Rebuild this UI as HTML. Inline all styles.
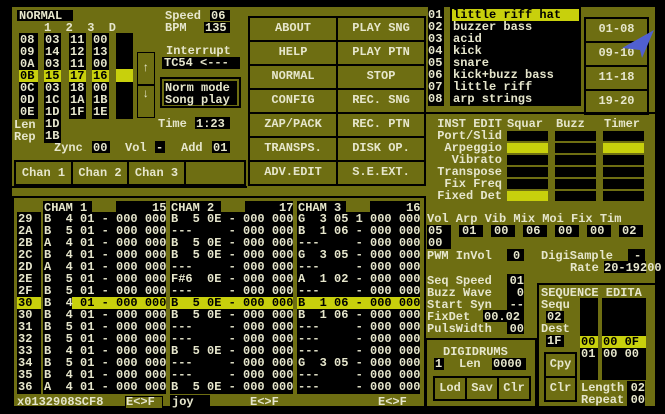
<!DOCTYPE html>
<html><head><meta charset="utf-8"><style>
body{margin:0;width:665px;height:414px;background:#000;position:relative;overflow:hidden;font:bold 12px/12px "Liberation Mono",monospace;color:#e6e6cc}
.a{position:absolute;white-space:pre}
.k{background:#000}
.y{background:#c8d00c;color:#000}
.o{background:#6e6e12}
.btn{position:absolute;background:#6e6e12;border:2px solid #000;box-sizing:border-box;text-align:center;line-height:20px}
.sq{position:absolute;background:#000;width:41px;height:10px}
.sqy{position:absolute;background:#c8d00c;width:41px;height:10px}
pre{margin:0;font:inherit}
</style></head><body>
<div class="a o" style="left:12px;top:7px;width:643px;height:401px"></div>

<div class="a k" style="left:17px;top:10px;width:56px;height:11px"></div>
<div class="a" style="left:19px;top:10px">NORMAL</div>
<div class="a" style="left:44px;top:22px">1  2  3  D</div>
<div class="a k" style="left:19px;top:33px;width:19px;height:86px"></div>
<div class="a k" style="left:44px;top:33px;width:17px;height:110px"></div>
<div class="a k" style="left:69px;top:33px;width:17px;height:86px"></div>
<div class="a k" style="left:92px;top:33px;width:17px;height:86px"></div>
<pre class="a" style="left:20px;top:34px">08
09
0A

0C
0D
0E
</pre>
<pre class="a" style="left:45px;top:34px">03
14
03

03
1C
1D
1D
1B</pre>
<pre class="a" style="left:70px;top:34px">11
12
11

18
1A
1F</pre>
<pre class="a" style="left:93px;top:34px">00
13
00

00
1B
1E</pre>
<div class="a y" style="left:19px;top:70px;width:19px;height:12px"></div>
<div class="a y" style="left:44px;top:70px;width:17px;height:12px"></div>
<div class="a y" style="left:69px;top:70px;width:17px;height:12px"></div>
<div class="a y" style="left:92px;top:70px;width:17px;height:12px"></div>
<div class="a" style="left:20px;top:70px;color:#000">0B</div>
<div class="a" style="left:45px;top:70px;color:#000">15</div>
<div class="a" style="left:70px;top:70px;color:#000">17</div>
<div class="a" style="left:93px;top:70px;color:#000">16</div>
<div class="a k" style="left:116px;top:33px;width:17px;height:86px"></div>
<div class="a y" style="left:116px;top:69px;width:17px;height:13px"></div>
<div class="a" style="left:137px;top:52px;width:18px;height:66px;border:1px solid #000;box-sizing:border-box"></div>
<div class="a" style="left:137px;top:84px;width:18px;height:2px;background:#000"></div>
<div class="a" style="left:142px;top:62px">↑</div>
<div class="a" style="left:142px;top:88px">↓</div>
<pre class="a" style="left:14px;top:119px">Len
Rep</pre>
<div class="a" style="left:165px;top:10px">Speed</div>
<div class="a k" style="left:210px;top:10px;width:20px;height:11px"></div>
<div class="a" style="left:211px;top:10px">06</div>
<div class="a" style="left:165px;top:22px">BPM</div>
<div class="a k" style="left:204px;top:22px;width:26px;height:11px"></div>
<div class="a" style="left:205px;top:22px">135</div>
<div class="a" style="left:166px;top:45px">Interrupt</div>
<div class="a k" style="left:162px;top:57px;width:78px;height:12px"></div>
<div class="a" style="left:164px;top:57px">TC54 &lt;---</div>
<div class="a" style="left:160px;top:77px;width:81px;height:31px;border:2px solid #000;box-sizing:border-box"></div>
<div class="a k" style="left:164px;top:81px;width:73px;height:24px"></div>
<pre class="a" style="left:165px;top:82px">Norm mode
Song play</pre>
<div class="a" style="left:158px;top:118px">Time</div>
<div class="a k" style="left:195px;top:117px;width:35px;height:12px"></div>
<div class="a" style="left:196px;top:118px">1:23</div>
<div class="a" style="left:54px;top:142px">Zync</div>
<div class="a k" style="left:92px;top:141px;width:18px;height:12px"></div>
<div class="a" style="left:93px;top:142px">00</div>
<div class="a" style="left:125px;top:142px">Vol</div>
<div class="a k" style="left:155px;top:141px;width:10px;height:12px"></div>
<div class="a" style="left:156px;top:142px">-</div>
<div class="a" style="left:181px;top:142px">Add</div>
<div class="a k" style="left:212px;top:141px;width:18px;height:12px"></div>
<div class="a" style="left:213px;top:142px">01</div>
<div class="btn" style="left:14px;top:160px;width:59px;height:26px;line-height:22px">Chan 1</div>
<div class="btn" style="left:71px;top:160px;width:58px;height:26px;line-height:22px">Chan 2</div>
<div class="btn" style="left:127px;top:160px;width:59px;height:26px;line-height:22px">Chan 3</div>
<div class="btn" style="left:184px;top:160px;width:62px;height:26px"></div>
<div class="a k" style="left:12px;top:186px;width:235px;height:2px"></div>

<div class="btn" style="left:248px;top:16px;width:90px;height:26px">ABOUT</div>
<div class="btn" style="left:336px;top:16px;width:90px;height:26px">PLAY SNG</div>
<div class="btn" style="left:248px;top:40px;width:90px;height:26px">HELP</div>
<div class="btn" style="left:336px;top:40px;width:90px;height:26px">PLAY PTN</div>
<div class="btn" style="left:248px;top:64px;width:90px;height:26px">NORMAL</div>
<div class="btn" style="left:336px;top:64px;width:90px;height:26px">STOP</div>
<div class="btn" style="left:248px;top:88px;width:90px;height:26px">CONFIG</div>
<div class="btn" style="left:336px;top:88px;width:90px;height:26px">REC. SNG</div>
<div class="btn" style="left:248px;top:112px;width:90px;height:26px">ZAP/PACK</div>
<div class="btn" style="left:336px;top:112px;width:90px;height:26px">REC. PTN</div>
<div class="btn" style="left:248px;top:136px;width:90px;height:26px">TRANSPS.</div>
<div class="btn" style="left:336px;top:136px;width:90px;height:26px">DISK OP.</div>
<div class="btn" style="left:248px;top:160px;width:90px;height:26px">ADV.EDIT</div>
<div class="btn" style="left:336px;top:160px;width:90px;height:26px">S.E.EXT.</div>

<div class="a k" style="left:428px;top:7px;width:16px;height:99px"></div>
<pre class="a" style="left:428px;top:9px;line-height:12px">01
02
03
04
05
06
07
08</pre>
<div class="a k" style="left:450px;top:7px;width:131px;height:99px"></div>
<div class="a y" style="left:452px;top:9px;width:127px;height:12px"></div>
<pre class="a" style="left:453px;top:9px;line-height:12px"><span style="color:#000">little riff hat</span>
buzzer bass
acid
kick
snare
kick+buzz bass
little riff
arp strings</pre>
<div class="btn" style="left:584px;top:17px;width:65px;height:26px">01-08</div>
<div class="btn" style="left:584px;top:41px;width:65px;height:26px">09-10</div>
<div class="btn" style="left:584px;top:65px;width:65px;height:26px">11-18</div>
<div class="btn" style="left:584px;top:89px;width:65px;height:26px">19-20</div>
<svg class="a" style="left:622px;top:30px" width="34" height="32"><polygon points="0,18 32,0 20,28 18,20" fill="#5060d0"/></svg>
<div class="a k" style="left:426px;top:112px;width:229px;height:2px"></div>

<pre class="a" style="left:428px;top:118px;text-align:right;width:74px">INST EDIT
Port/Slid
Arpeggio
Vibrato
Transpose
Fix Freq
Fixed Det</pre>
<div class="a" style="left:507px;top:118px">Squar</div>
<div class="a" style="left:556px;top:118px">Buzz</div>
<div class="a" style="left:604px;top:118px">Timer</div>
<div class="sq" style="left:507px;top:131px"></div><div class="sq" style="left:555px;top:131px"></div><div class="sq" style="left:603px;top:131px"></div>
<div class="sqy" style="left:507px;top:143px"></div><div class="sq" style="left:555px;top:143px"></div><div class="sqy" style="left:603px;top:143px"></div>
<div class="sq" style="left:507px;top:155px"></div><div class="sq" style="left:555px;top:155px"></div><div class="sq" style="left:603px;top:155px"></div>
<div class="sq" style="left:507px;top:167px"></div><div class="sq" style="left:555px;top:167px"></div><div class="sq" style="left:603px;top:167px"></div>
<div class="sq" style="left:507px;top:179px"></div><div class="sq" style="left:555px;top:179px"></div><div class="sq" style="left:603px;top:179px"></div>
<div class="sqy" style="left:507px;top:191px"></div><div class="sq" style="left:555px;top:191px"></div><div class="sq" style="left:603px;top:191px"></div>

<div class="a" style="left:427px;top:213px">Vol Arp Vib Mix Moi Fix Tim</div>
<div class="a k" style="left:427px;top:225px;width:24px;height:24px"></div>
<pre class="a" style="left:428px;top:225px">05
00</pre>
<div class="a k" style="left:459px;top:225px;width:24px;height:12px"></div><div class="a" style="left:462px;top:225px">01</div>
<div class="a k" style="left:491px;top:225px;width:24px;height:12px"></div><div class="a" style="left:494px;top:225px">00</div>
<div class="a k" style="left:523px;top:225px;width:24px;height:12px"></div><div class="a" style="left:526px;top:225px">06</div>
<div class="a k" style="left:555px;top:225px;width:24px;height:12px"></div><div class="a" style="left:558px;top:225px">00</div>
<div class="a k" style="left:587px;top:225px;width:24px;height:12px"></div><div class="a" style="left:590px;top:225px">00</div>
<div class="a k" style="left:619px;top:225px;width:24px;height:12px"></div><div class="a" style="left:622px;top:225px">02</div>
<div class="a" style="left:427px;top:250px">PWM InVol</div>
<div class="a k" style="left:507px;top:249px;width:17px;height:12px"></div><div class="a" style="left:513px;top:250px">0</div>
<div class="a" style="left:541px;top:250px">DigiSample</div>
<div class="a k" style="left:628px;top:249px;width:17px;height:12px"></div><div class="a" style="left:634px;top:250px">-</div>
<div class="a" style="left:570px;top:262px">Rate</div>
<div class="a k" style="left:604px;top:261px;width:42px;height:12px"></div><div class="a" style="left:604px;top:262px">20-19200</div>
<pre class="a" style="left:427px;top:275px">Seq Speed
Buzz Wave
Start Syn
FixDet
PulsWidth</pre>
<div class="a k" style="left:507px;top:274px;width:17px;height:60px"></div>
<pre class="a" style="left:507px;top:275px;text-align:right;width:17px">01
0
--

00</pre>
<div class="a k" style="left:483px;top:310px;width:41px;height:12px"></div><div class="a" style="left:484px;top:311px">00.02</div>

<div class="a" style="left:425px;top:338px;width:112px;height:70px;border:2px solid #000;box-sizing:border-box"></div>
<div class="a" style="left:443px;top:346px">DIGIDRUMS</div>
<div class="a k" style="left:434px;top:358px;width:10px;height:12px"></div><div class="a" style="left:435px;top:358px">1</div>
<div class="a" style="left:459px;top:358px">Len</div>
<div class="a k" style="left:492px;top:358px;width:34px;height:12px"></div><div class="a" style="left:493px;top:358px">0000</div>
<div class="btn" style="left:433px;top:376px;width:34px;height:25px">Lod</div>
<div class="btn" style="left:465px;top:376px;width:34px;height:25px">Sav</div>
<div class="btn" style="left:497px;top:376px;width:34px;height:25px">Clr</div>

<div class="a" style="left:537px;top:283px;width:118px;height:125px;border:2px solid #000;box-sizing:border-box;border-right:none"></div>
<div class="a" style="left:541px;top:287px">SEQUENCE EDITA</div>
<pre class="a" style="left:541px;top:299px">Sequ
 02
Dest
 1F</pre>
<div class="a k" style="left:546px;top:311px;width:18px;height:12px"></div><div class="a" style="left:547px;top:311px">02</div>
<div class="a k" style="left:546px;top:335px;width:18px;height:12px"></div><div class="a" style="left:547px;top:335px">1F</div>
<div class="a k" style="left:580px;top:298px;width:18px;height:82px"></div>
<div class="a k" style="left:602px;top:298px;width:44px;height:82px"></div>
<div class="a y" style="left:580px;top:336px;width:18px;height:12px"></div>
<div class="a y" style="left:602px;top:336px;width:44px;height:12px"></div>
<div class="a" style="left:581px;top:336px;color:#000">00</div>
<div class="a" style="left:603px;top:336px;color:#000">00 0F</div>
<div class="a" style="left:581px;top:348px">01</div>
<div class="a" style="left:603px;top:348px">00 00</div>
<div class="btn" style="left:544px;top:352px;width:33px;height:26px">Cpy</div>
<div class="btn" style="left:544px;top:376px;width:33px;height:26px">Clr</div>
<div class="a" style="left:581px;top:382px">Length</div>
<div class="a k" style="left:627px;top:381px;width:18px;height:26px"></div>
<pre class="a" style="left:581px;top:382px;width:64px;text-align:right">02
00</pre>
<div class="a" style="left:581px;top:394px">Repeat</div>

<div class="a" style="left:12px;top:196px;width:414px;height:212px;border:2px solid #000;box-sizing:border-box"></div>
<div class="a k" style="left:17px;top:212px;width:24px;height:182px"></div>
<div class="a k" style="left:43px;top:201px;width:123px;height:193px"></div>
<div class="a k" style="left:170px;top:201px;width:123px;height:193px"></div>
<div class="a k" style="left:297px;top:201px;width:123px;height:193px"></div>
<div class="a o" style="left:92px;top:201px;width:24px;height:11px"></div>
<div class="a o" style="left:221px;top:201px;width:24px;height:11px"></div>
<div class="a o" style="left:346px;top:201px;width:24px;height:11px"></div>
<div class="a y" style="left:17px;top:297px;width:24px;height:12px"></div>
<div class="a y" style="left:72px;top:297px;width:94px;height:12px"></div>
<div class="a y" style="left:170px;top:297px;width:123px;height:12px"></div>
<div class="a y" style="left:297px;top:297px;width:123px;height:12px"></div>
<pre class="a" style="left:44px;top:202px">CHAM 1         15</pre>
<pre class="a" style="left:171px;top:202px">CHAM 2         17</pre>
<pre class="a" style="left:298px;top:202px">CHAM 3         16</pre>
<pre class="a" style="left:18px;top:213px">29
2A
2B
2C
2D
2E
2F
<span style="color:#000">30</span>
30
31
32
33
34
35
36</pre>
<pre class="a" style="left:44px;top:213px">B  4 01 - 000 000
B  5 01 - 000 000
A  4 01 - 000 000
B  4 01 - 000 000
A  4 01 - 000 000
B  5 01 - 000 000
B  5 01 - 000 000
B  4<span style="color:#000"> 01 - 000 000</span>
B  4 01 - 000 000
B  5 01 - 000 000
B  5 01 - 000 000
B  4 01 - 000 000
B  5 01 - 000 000
B  4 01 - 000 000
A  4 01 - 000 000</pre>
<pre class="a" style="left:171px;top:213px">B  5 0E - 000 000
---     - 000 000
B  5 0E - 000 000
B  5 0E - 000 000
---     - 000 000
F#6  0E - 000 000
---     - 000 000
<span style="color:#000">B  5 0E - 000 000</span>
B  5 0E - 000 000
---     - 000 000
---     - 000 000
B  5 0E - 000 000
---     - 000 000
---     - 000 000
B  5 0E - 000 000</pre>
<pre class="a" style="left:298px;top:213px">G  3 05 1 000 000
B  1 06 - 000 000
---     - 000 000
G  3 05 - 000 000
---     - 000 000
A  1 02 - 000 000
---     - 000 000
<span style="color:#000">B  1 06 - 000 000</span>
B  1 06 - 000 000
---     - 000 000
---     - 000 000
---     - 000 000
G  3 05 - 000 000
---     - 000 000
---     - 000 000</pre>
<div class="a" style="left:17px;top:396px">x0132908SCF8</div>
<div class="a" style="left:125px;top:396px;width:36px;height:11px;background:#6e6e12;border:1px solid #000"></div>
<div class="a" style="left:126px;top:396px">E&lt;&gt;F</div>
<div class="a k" style="left:170px;top:395px;width:40px;height:12px"></div>
<div class="a" style="left:172px;top:396px">joy</div>
<div class="a" style="left:250px;top:396px">E&lt;&gt;F</div>
<div class="a" style="left:378px;top:396px">E&lt;&gt;F</div>
</body></html>
